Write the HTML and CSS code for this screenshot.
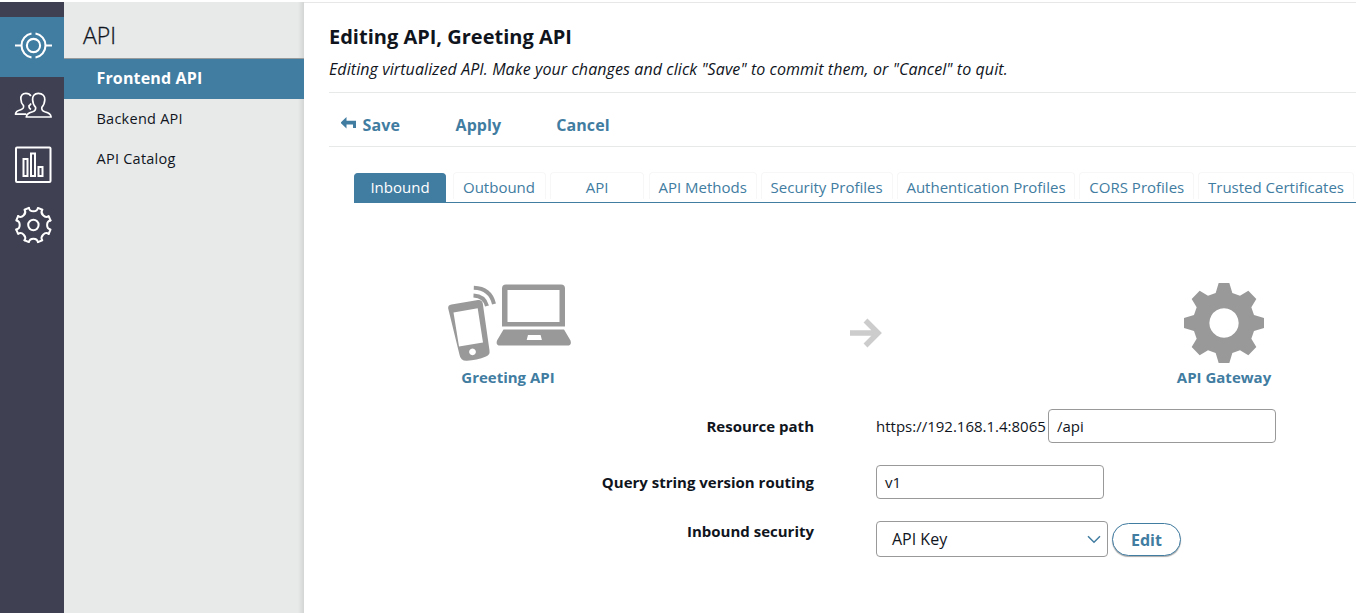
FILE: index.html
```html
<!DOCTYPE html>
<html lang="en">
<head>
<meta charset="utf-8">
<title>API Manager</title>
<link rel="stylesheet" href="styles.css">
</head>
<body>
<div class="app">
  <nav class="rail">
    <a class="rail-item active"><svg width="38" height="38" viewBox="-19.500 -19.500 38 38" fill="none" stroke="#fff" stroke-width="2.100"><circle r="6.600"/><path d="M-2-12A12.2 12.2 0 0 0-2 12M2-12A12.2 12.2 0 0 1 2 12M-18.500 0h6M12.500 0h6"/></svg></a>
    <a class="rail-item"><svg width="38" height="38" viewBox="-.3 0 38 38" fill="none" stroke="#fff" stroke-width="1.7" stroke-linejoin="round"><path d="M24 7.3c-4 0-6 3-5.700 6.500.2 3.300 1.400 6 3 7.500.4 2.800-.8 3.700-3 4.500-4 1.300-6 2-6.300 5.200h24.800c-.3-3.200-2.300-3.900-6.300-5.200-2.200-.8-3.400-1.700-3-4.500 1.600-1.500 2.800-4.200 3-7.500.3-3.500-2-6.500-6.500-6.500zM16.600 10c-1-1.800-2.600-2.600-5-2.600-3.500 0-5.400 2.500-5 5.800.1 3 1.200 5.200 2.600 6.500.5 2.500-.3 3.100-2.700 4-3.500 1.200-5 1.700-5.300 4.500H12M16.700 17.500c-.5 1-1.200 1.800-2 2.200-.3 2.500.5 3 2 3.700"/></svg></a>
    <a class="rail-item"><svg width="38" height="38" viewBox="0 .5 38 38" fill="none" stroke="#fff" stroke-width="2"><rect x="2" y="2" width="34.500" height="34.500" rx="1"/><path d="M9.500 13.500h4v17h-4zM17 8h4v22.500h-4zM24.500 21.500h4v9h-4z"/></svg></a>
    <a class="rail-item"><svg width="38" height="38" viewBox="-19.400 -19 38 38" fill="none" stroke="#fff" stroke-width="2" stroke-linejoin="round" stroke-linecap="round"><defs><path id="tooth" d="M-4.500-17.100Q-3.900-13.700 0-13.700Q3.900-13.700 4.500-17.100L8.900-15.300"/></defs><circle r="5.200"/><use href="#tooth"/><use href="#tooth" transform="rotate(45)"/><use href="#tooth" transform="rotate(90)"/><use href="#tooth" transform="rotate(135)"/><use href="#tooth" transform="rotate(180)"/><use href="#tooth" transform="rotate(225)"/><use href="#tooth" transform="rotate(270)"/><use href="#tooth" transform="rotate(315)"/></svg></a>
  </nav>
  <aside class="menu">
    <h2 class="menu-title"><span>API</span></h2>
    <a class="menu-item current"><span>Frontend API</span></a>
    <a class="menu-item"><span>Backend API</span></a>
    <a class="menu-item"><span>API Catalog</span></a>
  </aside>
  <main class="main">
    <header class="heading">
      <h1 class="title"><span>Editing API, Greeting API</span></h1>
      <p class="subtitle"><span>Editing virtualized API. Make your changes and click "Save" to commit them, or "Cancel" to quit.</span></p>
    </header>
    <div class="actions">
      <a class="action save"><svg width="16" height="13" viewBox="0.500 0 16 13" fill="#417ca1"><path d="M0 5.700L6 0v3.800h9.500V11h-3V7.500H6v4z"/></svg><span>Save</span></a>
      <a class="action apply"><span>Apply</span></a>
      <a class="action"><span>Cancel</span></a>
    </div>
    <div class="tabs">
      <a class="tab selected"><span>Inbound</span></a>
      <a class="tab"><span>Outbound</span></a>
      <a class="tab short"><span>API</span></a>
      <a class="tab"><span>API Methods</span></a>
      <a class="tab"><span>Security Profiles</span></a>
      <a class="tab"><span>Authentication Profiles</span></a>
      <a class="tab"><span>CORS Profiles</span></a>
      <a class="tab"><span>Trusted Certificates</span></a>
    </div>
    <section class="flow">
      <figure class="node">
        <svg width="126" height="80" viewBox="-1 0 126 80"><g fill="#999"><path fill-rule="evenodd" d="M5.500 21.500L32 17q4-.5 4.800 3.500l6.700 47q.7 4.500-3.500 6c-6 2.500-13 4-19 4.200q-6.500.3-7.500-6L2.200 25.500q-.5-3.500 3.300-4zM7.500 29.500l5.500 34 24-4-5.300-34.300zM26.500 65.500a3.400 3.400 0 1 0 .01 0z"/><path fill-rule="evenodd" d="M60 1.500h55q4 0 4 4V43.500H56V5.500q0-4 4-4zM61.500 7v32h52V7z"/><path fill-rule="evenodd" d="M57.500 46.500h60.500l6.500 11q1.500 5-3 5H54q-4.500 0-3-5zM82 52l-1.300 5h15.200l-1.300-5z"/></g><path d="M27.500 12.500q11 .5 13.500 10.500M27.800 4.800q16.500.5 20.200 16.200" fill="none" stroke="#999" stroke-width="4"/></svg>
        <figcaption>Greeting API</figcaption>
      </figure>
      <svg class="arrow" width="33" height="30" viewBox="0 0 33 30" fill="none" stroke="#ccc" stroke-width="5.500"><path d="M0 15H28M15.500 2.500L28 15 15.500 27.500"/></svg>
      <figure class="node">
        <svg width="80" height="80" viewBox="-120 -120 240 240" fill="#999"><path fill-rule="evenodd" d="M-16-120H16L25-90 48-82 73-97 97-72 82-47 90-24 120-15V15L90 24 82 47 97 72 73 97 48 82 25 90 16 120H-16L-25 90-48 82-73 97-97 72-82 47-90 24-120 15V-15L-90-24-82-47-97-72-73-97-48-82-25-90zM0-44A44 44 0 1 0 .1-44z"/></svg>
        <figcaption>API Gateway</figcaption>
      </figure>
    </section>
    <form class="form">
      <div class="row">
        <label class="label"><span>Resource path</span></label>
        <span class="prefix">https://192.168.1.4:8065</span>
        <div class="field"><span>/api</span></div>
      </div>
      <div class="row">
        <label class="label"><span>Query string version routing</span></label>
        <div class="field"><span>v1</span></div>
      </div>
      <div class="row security">
        <label class="label"><span>Inbound security</span></label>
        <div class="select"><span>API Key</span><svg width="14" height="9" viewBox="0 0 14 9" fill="none" stroke="#417ca1" stroke-width="1.500"><path d="M1 1.200l6 6 6-6"/></svg></div>
        <button class="edit" type="button"><span>Edit</span></button>
      </div>
    </form>
  </main>
</div>
</body>
</html>
```
FILE: styles.css
```css
* { box-sizing: border-box; }
body { margin: 0; background: #fff; color: #10151d; font: 15px/20px "Open Sans", "Noto Sans", sans-serif; overflow: hidden; }
h1, h2, p, figure { margin: 0; }
.app { display: flex; height: 613px; padding-top: 2px; }
.rail { width: 64px; padding-top: 15px; background: #3f4152; flex: none; }
.rail-item { display: flex; height: 60px; align-items: center; justify-content: center; padding: 0 0 5px 2px; }
.rail-item.active { background: #417ca1; padding-bottom: 4px; }
.menu { width: 240px; flex: none; background: linear-gradient(to left, #d3d5d5, #e8eaea 6px); }
.menu-title { height: 57px; padding: 18px 0 0 19px; border-bottom: 1px solid #989b9c; font-size: 23px; font-weight: 300; line-height: 30px; -webkit-text-stroke: .3px; }
.menu-item { display: flex; align-items: center; height: 40px; padding-left: 32.500px; font-size: 14.500px; letter-spacing: .25px; }
.menu-item.current { padding-bottom: 2px; background: #417ca1; color: #fff; font-weight: 700; font-size: 16px; letter-spacing: .15px; }
.main { flex: 1; min-width: 0; padding-left: 25px; border-top: 1px solid #e7e7e7; overflow: hidden; }
.heading { height: 90px; padding-top: 20px; border-bottom: 1px solid #e7e9e9; }
.title { font-size: 20px; font-weight: 700; line-height: 28px; }
.subtitle { margin-top: 6px; font-size: 16px; letter-spacing: .09px; font-style: italic; line-height: 24px; white-space: nowrap; }
.actions { display: flex; align-items: center; height: 54px; padding: 10px 0 0 11.500px; border-bottom: 1px solid #e7e9e9; color: #417ca1; font-size: 16px; font-weight: 700; letter-spacing: .1px; }
.action { display: flex; gap: 6px; width: 100.700px; }
.action.save { width: 115px; }
.action.save svg { margin-top: 2px; }
.tabs { display: flex; gap: 4px; height: 31px; margin: 25px 0 0 25px; border-bottom: 1px solid #417ca1; }
.tab { flex: none; min-width: 93px; height: 27px; padding: 5px 8.900px 0; border: 1px solid #f7f7f7; border-bottom: 0; border-radius: 4px 4px 0 0; color: #417ca1; text-align: center; white-space: nowrap; line-height: 18px; }
.tab.short { min-width: 94px; margin: 0 .5px; }
.tab.selected { min-width: 92px; height: 29px; margin: 1px 2.500px 0 0; padding-top: 4px; border-color: #417ca1; background: #417ca1; color: #fff; }
.flow { display: flex; align-items: flex-start; height: 206px; padding: 80px 0 0 116px; }
.node { width: 126px; text-align: center; color: #417ca1; font-weight: 700; }
.node svg { display: block; margin: 0 auto; }
.node figcaption { margin-top: 4px; }
.arrow { margin: 35px 278px 0 279px; }
.form { display: flex; flex-direction: column; gap: 22px; }
.row { display: flex; align-items: center; height: 34px; }
.label { width: 485px; margin-right: 62px; text-align: right; font-weight: 700; }
.prefix { width: 172px; }
.field { width: 228px; height: 34px; padding: 6px 8px; border: 1px solid #999; border-radius: 4px; }
.row.security { height: 36px; }
.security .label { align-self: flex-start; }
.select { display: flex; align-items: center; justify-content: space-between; width: 232px; height: 36px; padding: 0 6px 0 15px; border: 1px solid #999; border-radius: 4px; font-size: 16px; }
.edit { width: 69px; height: 33px; margin-left: 4px; margin-top: 1px; padding: 0; border: 1px solid #417ca1; border-radius: 17px; background: #fff; box-shadow: 0 1px 1px #aaa; color: #417ca1; font: 700 16px "Open Sans", "Noto Sans", sans-serif; }
```
